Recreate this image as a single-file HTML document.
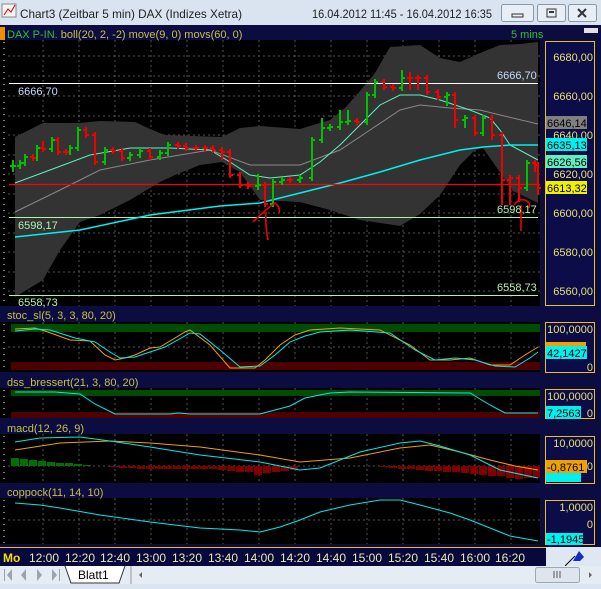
<!DOCTYPE html>
<html><head><meta charset="utf-8"><style>
*{margin:0;padding:0}
body{width:601px;height:589px;overflow:hidden;background:#dfe8f2;font-family:"Liberation Sans",sans-serif;position:relative}
svg{position:absolute;left:0;top:0}
</style></head><body>
<svg width="601" height="589" viewBox="0 0 601 589" font-family="Liberation Sans, sans-serif">
<rect x="0" y="0" width="601" height="25" fill="#d9e4f0"/>
<rect x="2" y="4" width="14" height="13" fill="#f4f4f4" stroke="#888"/>
<path d="M4 15l4-6 3 3 4-7" stroke="#d00" fill="none"/>
<text x="20" y="18" font-size="12" fill="#222" textLength="222" lengthAdjust="spacingAndGlyphs">Chart3 (Zeitbar 5 min)  DAX (Indizes Xetra)</text>
<text x="312" y="18" font-size="12" fill="#222" textLength="180" lengthAdjust="spacingAndGlyphs">16.04.2012 11:45 - 16.04.2012 16:35</text>
<rect x="501.5" y="4.5" width="32" height="17" rx="2" fill="#e8eef6" stroke="#8a97a8"/>
<rect x="512" y="14" width="11" height="3" fill="none" stroke="#333"/>
<rect x="537.5" y="4.5" width="28" height="17" rx="2" fill="#e8eef6" stroke="#8a97a8"/>
<rect x="547" y="9" width="9" height="8" fill="none" stroke="#333"/><rect x="549" y="11" width="5" height="2" fill="#333"/>
<rect x="568.5" y="4.5" width="28" height="17" rx="2" fill="#e8eef6" stroke="#8a97a8"/>
<path d="M578 9l8 8M586 9l-8 8" stroke="#333" stroke-width="2"/>

<rect x="0" y="25" width="601" height="541" fill="#0c0c40"/>
<rect x="0" y="27" width="5" height="13" fill="#f09000"/>
<rect x="0" y="40" width="540" height="266" fill="#000"/>
<rect x="0" y="322" width="540" height="50" fill="#000"/>
<rect x="0" y="388" width="540" height="30" fill="#000"/>
<rect x="0" y="434" width="540" height="49" fill="#000"/>
<rect x="0" y="498" width="540" height="46" fill="#000"/>
<g stroke="#fff" stroke-dasharray="1 5">
<line x1="4" y1="42" x2="4" y2="306"/><line x1="4" y1="324" x2="4" y2="372"/><line x1="4" y1="390" x2="4" y2="418"/><line x1="4" y1="436" x2="4" y2="483"/><line x1="4" y1="500" x2="4" y2="544"/>
</g>
<g fill="#0c0c48" stroke="#e8c020">
<rect x="545.5" y="41.5" width="49" height="264"/>
<rect x="545.5" y="322.5" width="49" height="50"/>
<rect x="545.5" y="389.5" width="49" height="29"/>
<rect x="545.5" y="436.5" width="49" height="47"/>
<rect x="545.5" y="500.5" width="49" height="44"/>
</g>

<text x="7" y="38" font-size="11"><tspan fill="#30c030">DAX P-IN.</tspan><tspan fill="#c8c040"> boll(20, 2, -2) move(9, 0) movs(60, 0)</tspan></text>
<text x="511" y="38" font-size="11" fill="#30c030">5 mins</text>
<rect x="584" y="28" width="14" height="5" fill="#e0e0e0"/>
<text x="7" y="319" font-size="11" fill="#c8c040">stoc_sl(5, 3, 3, 80, 20)</text>
<text x="7" y="386" font-size="11" fill="#c8c040">dss_bressert(21, 3, 80, 20)</text>
<text x="7" y="432" font-size="11" fill="#c8c040">macd(12, 26, 9)</text>
<text x="7" y="496" font-size="11" fill="#c8c040">coppock(11, 14, 10)</text>

<g stroke="#555" stroke-dasharray="2 3">
<path d="M43 40V306M79 40V306M115 40V306M151 40V306M187 40V306M223 40V306M259 40V306M295 40V306M331 40V306M367 40V306M403 40V306M439 40V306M475 40V306M511 40V306"/>
<path d="M43 322V372M79 322V372M115 322V372M151 322V372M187 322V372M223 322V372M259 322V372M295 322V372M331 322V372M367 322V372M403 322V372M439 322V372M475 322V372M511 322V372"/>
<path d="M43 388V418M79 388V418M115 388V418M151 388V418M187 388V418M223 388V418M259 388V418M295 388V418M331 388V418M367 388V418M403 388V418M439 388V418M475 388V418M511 388V418"/>
<path d="M43 434V483M79 434V483M115 434V483M151 434V483M187 434V483M223 434V483M259 434V483M295 434V483M331 434V483M367 434V483M403 434V483M439 434V483M475 434V483M511 434V483"/>
<path d="M43 498V544M79 498V544M115 498V544M151 498V544M187 498V544M223 498V544M259 498V544M295 498V544M331 498V544M367 498V544M403 498V544M439 498V544M475 498V544M511 498V544"/>
<path d="M8 56H540M8 76H540M8 96H540M8 116H540M8 135H540M8 155H540M8 174H540M8 194H540M8 213H540M8 233H540M8 252H540M8 272H540M8 291H540"/>
<path d="M8 347H540M8 466H540M8 520H540"/>
</g>

<path d="M15 137L43 123L79 123L100 121L135 122L150 129L165 135L222 137L240 128L260 126L300 129L330 120L345 108L360 91L375 73L390 47L420 45L440 58L460 62L480 53L500 45L520 44L538 42L538 203L513 191L483 148L475 150L460 165L440 195L420 214L400 226L360 220L330 210L300 202L260 200L240 172L222 162L200 165L175 175L160 182L130 200L100 215L80 222L60 250L43 280L15 297Z" fill="#333"/>
<line x1="9" y1="83.5" x2="538" y2="83.5" stroke="#fff"/>
<line x1="9" y1="217.5" x2="538" y2="217.5" stroke="#b0f0b0"/>
<line x1="9" y1="295.5" x2="538" y2="295.5" stroke="#b0f0b0"/>
<polyline fill="none" stroke="#888" points="15,212 60,190 100,170 150,160 210,150 250,165 300,165 340,150 370,130 400,110 420,105 450,108 480,110 500,115 538,124"/>
<polyline fill="none" stroke="#60f0c0" points="15,183 50,170 90,155 130,148 170,148 210,150 230,162 250,175 270,178 300,175 320,162 340,145 360,125 380,105 400,95 420,95 440,100 470,110 490,118 500,130 510,145 538,160"/>
<polyline fill="none" stroke="#00f0f0" stroke-width="1.5" points="15,237 80,230 150,215 220,206 260,203 300,193 340,183 380,172 420,160 460,150 483,147 510,145 538,145"/>
<line x1="9" y1="184.5" x2="540" y2="184.5" stroke="#f00" stroke-width="1.2"/>
<path fill="none" stroke="#00c000" stroke-width="2" d="M10 166h3M13 160V172M13 166h3M17 166h3M20 160V169M20 163h3M22 163h3M25 154V166M25 157h3M34 158h3M37 145V161M37 148h3M49 149h3M52 137V152M52 140h3M67 152h3M70 145V155M70 148h3M75 148h3M78 127V151M78 130h3M102 162h3M105 147V165M105 150h3M127 158h3M130 152V161M130 155h3M137 155h3M140 148V158M140 151h3M157 157h3M160 150V160M160 153h3M165 153h3M168 142V156M168 145h3M255 186h3M258 174V190M258 185h3M270 204h3M273 179V207M273 182h3M279 182h3M282 177V185M282 180h3M297 180h3M300 175V183M300 178h3M309 178h3M312 137V181M312 140h3M319 140h3M322 118V143M322 128h3M327 128h3M330 124V131M330 127h3M337 127h3M340 110V130M340 122h3M345 122h3M348 110V125M348 121h3M364 122h3M367 92V125M367 95h3M372 95h3M375 79V98M375 82h3M399 88h3M402 70V91M402 78h3M444 97h3M447 92V106M447 95h3M462 120h3M465 115V128M465 118h3M480 133h3M483 115V136M483 118h3M524 188h3M527 160V191M527 163h3"/>
<path fill="none" stroke="#f00000" stroke-width="2" d="M30 157h3M33 154V161M33 158h3M40 148h3M43 141V152M43 149h3M55 140h3M58 137V155M58 152h3M63 152h3M66 149V155M66 152h3M83 130h3M86 127V138M86 135h3M92 135h3M95 132V165M95 162h3M110 150h3M113 147V154M113 151h3M119 151h3M122 148V161M122 158h3M147 151h3M150 148V160M150 157h3M175 145h3M178 142V149M178 146h3M183 146h3M186 143V151M186 148h3M193 148h3M196 145V151M196 148h3M202 148h3M205 145V151M205 148h3M210 148h3M213 145V153M213 150h3M219 150h3M222 147V160M222 152h3M227 152h3M230 149V178M230 175h3M237 175h3M240 172V188M240 185h3M245 185h3M248 182V189M248 186h3M262 185h3M265 182V207M265 204h3M287 180h3M290 177V183M290 180h3M354 121h3M357 118V125M357 122h3M381 82h3M384 79V90M384 87h3M390 87h3M393 84V91M393 88h3M407 78h3M410 72V90M410 78h3M415 78h3M418 75V90M418 78h3M424 78h3M427 75V95M427 92h3M435 92h3M438 89V100M438 97h3M452 95h3M455 92V128M455 120h3M472 118h3M475 115V136M475 133h3M489 118h3M492 115V140M492 135h3M499 135h3M502 132V205M502 180h3M507 180h3M510 175V205M510 178h3M516 178h3M519 175V202M519 188h3M532 163h3M535 160V172M535 165h3M535 165h3M538 162V195M538 188h3"/>
<path d="M253 222Q265 210 275 203Q281 208 279 213M266 212Q265 225 268 240" fill="none" stroke="#f00000" stroke-width="1.6"/>
<path d="M514 205Q520 197 527 201Q531 204 529 208M521 205V231" fill="none" stroke="#f00000" stroke-width="1.6"/>
<g font-size="11">
<text x="18" y="95" fill="#c8dcff">6666,70</text>
<text x="497" y="79" fill="#c8dcff">6666,70</text>
<text x="18" y="229" fill="#b0f0b0">6598,17</text>
<text x="497" y="213" fill="#b0f0b0">6598,17</text>
<text x="18" y="306" fill="#b0f0b0">6558,73</text>
<text x="497" y="291" fill="#b0f0b0">6558,73</text>
</g>
<g font-size="11" fill="#e8e070" text-anchor="end">
<text x="593" y="61">6680,00</text><text x="593" y="100">6660,00</text><text x="593" y="139">6640,00</text><text x="593" y="178">6620,00</text><text x="593" y="217">6600,00</text><text x="593" y="256">6580,00</text><text x="593" y="295">6560,00</text>
</g>
<rect x="546" y="116" width="41" height="13" fill="#808080"/><text x="547" y="127" font-size="11" fill="#000">6646,14</text>
<rect x="546" y="138" width="41" height="13" fill="#00f0f0"/><text x="547" y="149" font-size="11" fill="#000">6635,13</text>
<rect x="546" y="155" width="41" height="13" fill="#60f0c0"/><text x="547" y="166" font-size="11" fill="#000">6626,56</text>
<rect x="546" y="181" width="41" height="13" fill="#f0f000"/><text x="547" y="192" font-size="11" fill="#000">6613,32</text>

<rect x="11" y="324" width="529" height="8" fill="#004c00"/>
<rect x="11" y="362" width="529" height="8" fill="#4c0000"/>
<polyline fill="none" stroke="#f0a000" points="15,329 35,328 45,331 70,340 90,341 105,355 115,360 125,358 135,355 150,348 160,347 185,332 190,330 210,345 230,368 255,368 265,360 280,345 295,335 310,330 340,328 380,330 410,345 430,360 450,360 470,358 490,365 510,365 525,355 538,347"/>
<polyline fill="none" stroke="#00e8f0" points="15,331 35,329 50,330 75,338 95,342 110,352 120,358 135,357 150,352 165,347 190,333 200,334 220,350 240,367 260,366 275,355 290,342 305,336 320,332 350,330 390,333 415,350 435,360 455,358 475,360 495,366 515,367 530,358 538,352"/>
<g font-size="11" fill="#e8e070" text-anchor="end"><text x="593" y="333">100,0000</text><text x="593" y="371">0</text></g>
<rect x="546" y="342" width="40" height="8" fill="#f0a000"/>
<rect x="546" y="346" width="41" height="13" fill="#00f0f0"/><text x="547" y="357" font-size="11" fill="#000">42,1427</text>

<rect x="11" y="390" width="529" height="6" fill="#004c00"/>
<rect x="11" y="412" width="529" height="6" fill="#4c0000"/>
<polyline fill="none" stroke="#00e8f0" points="15,392 55,392 80,394 95,404 115,414 170,414 178,413 190,414 260,414 290,406 305,398 330,393 350,392 470,393 490,405 505,413 538,413"/>
<g font-size="11" fill="#e8e070" text-anchor="end"><text x="593" y="400">100,0000</text><text x="593" y="417">0</text></g>
<rect x="546" y="406" width="35" height="13" fill="#00f0f0"/><text x="547" y="417" font-size="11" fill="#000">7,2563</text>

<path fill="#007000" d="M11 458h8v8h-8zM20 459h8v7h-8zM29 460h8v6h-8zM38 461h8v5h-8zM47 462h8v4h-8zM56 463h8v3h-8zM65 463h8v3h-8zM74 464h8v2h-8zM83 465h8v1h-8z"/>
<path fill="#800000" d="M110 466h8v1h-8zM119 466h8v2h-8zM128 466h8v2h-8zM137 466h8v3h-8zM146 466h8v3h-8zM155 466h8v3h-8zM164 466h8v3h-8zM173 466h8v3h-8zM182 466h8v3h-8zM191 466h8v3h-8zM200 466h8v3h-8zM209 466h8v3h-8zM218 466h8v4h-8zM227 466h8v5h-8zM236 466h8v6h-8zM245 466h8v6h-8zM254 466h8v9h-8zM263 466h8v7h-8zM272 466h8v6h-8zM281 466h8v5h-8zM290 466h8v4h-8zM380 466h8v1h-8zM389 466h8v2h-8zM398 466h8v3h-8zM407 466h8v3h-8zM416 466h8v4h-8zM425 466h8v5h-8zM434 466h8v5h-8zM443 466h8v6h-8zM452 466h8v6h-8zM461 466h8v7h-8zM470 466h8v8h-8zM479 466h8v9h-8zM488 466h8v10h-8zM497 466h8v10h-8zM506 466h8v12h-8zM515 466h8v13h-8zM524 466h8v12h-8zM533 466h7v12h-7z"/>
<polyline fill="none" stroke="#f0a000" points="15,450 60,443 110,441 150,443 200,447 260,455 300,462 350,458 400,448 430,445 460,452 490,460 515,466 538,470"/>
<polyline fill="none" stroke="#00e8f0" points="15,442 40,438 80,437 110,441 150,447 200,455 260,462 300,470 320,468 360,452 400,443 420,441 440,446 470,455 500,470 538,478"/>
<g font-size="11" fill="#e8e070" text-anchor="end"><text x="593" y="447">10,0000</text><text x="593" y="470">0</text></g>
<rect x="546" y="472" width="35" height="10" fill="#00f0f0"/>
<rect x="546" y="460" width="41" height="13" fill="#f0a000"/><text x="547" y="471" font-size="11" fill="#000">-0,8761</text>

<polyline fill="none" stroke="#00e8f0" points="15,503 40,505 60,508 100,515 150,522 200,528 220,529 240,530 260,532 280,527 300,520 320,512 350,505 380,500 400,500 420,505 450,513 470,520 490,528 510,536 538,541"/>
<g font-size="11" fill="#e8e070" text-anchor="end"><text x="593" y="511">1,0000</text><text x="593" y="528">0</text></g>
<rect x="546" y="533" width="37" height="12" fill="#00f0f0"/><text x="547" y="543" font-size="11" fill="#000">-1,1945</text>

<rect x="0" y="547" width="546" height="19" fill="#08083c"/>
<line x1="0" y1="547.5" x2="546" y2="547.5" stroke="#e8c020"/>
<rect x="546" y="547" width="55" height="19" fill="#dfe8f2"/>
<path d="M573 561l6-10 5 6-4 4z" fill="#1030c0"/><path d="M565 566l10-10" stroke="#000"/>
<text x="3" y="562" font-size="12" font-weight="bold" fill="#f0e000">Mo</text>
<g font-size="12" fill="#e8e8b0" text-anchor="middle">
<text x="44" y="562">12:00</text><text x="80" y="562">12:20</text><text x="115" y="562">12:40</text><text x="151" y="562">13:00</text><text x="187" y="562">13:20</text><text x="223" y="562">13:40</text><text x="259" y="562">14:00</text><text x="295" y="562">14:20</text><text x="331" y="562">14:40</text><text x="367" y="562">15:00</text><text x="403" y="562">15:20</text><text x="439" y="562">15:40</text><text x="475" y="562">16:00</text><text x="510" y="562">16:20</text>
</g>

<rect x="0" y="566" width="601" height="18" fill="#e6ecf4"/>
<rect x="0" y="584" width="601" height="5" fill="#dbe5f1"/>
<g fill="#9aa4b0"><path d="M4 569h1v12h-1zM12 569l-5 6 5 6zM26 569l-5 6 5 6zM37 569l5 6-5 6zM52 569l5 6-5 6zM59 569h1v12h-1z"/></g>
<path d="M65 566l6 17h48l6-17" fill="#fff" stroke="#333"/>
<text x="78" y="579" font-size="12" fill="#000">Blatt1</text>
<line x1="131" y1="566" x2="131" y2="584" stroke="#999"/>
<path d="M142 572l-3 3 3 3z" fill="#666"/>
<rect x="535.5" y="567.5" width="44" height="15" rx="2" fill="#dfe5ee" stroke="#9aa"/>
<path d="M554 571v7M557 571v7M560 571v7" stroke="#555"/>
<path d="M589 572l3 3-3 3z" fill="#666"/>
</svg>
</body></html>
